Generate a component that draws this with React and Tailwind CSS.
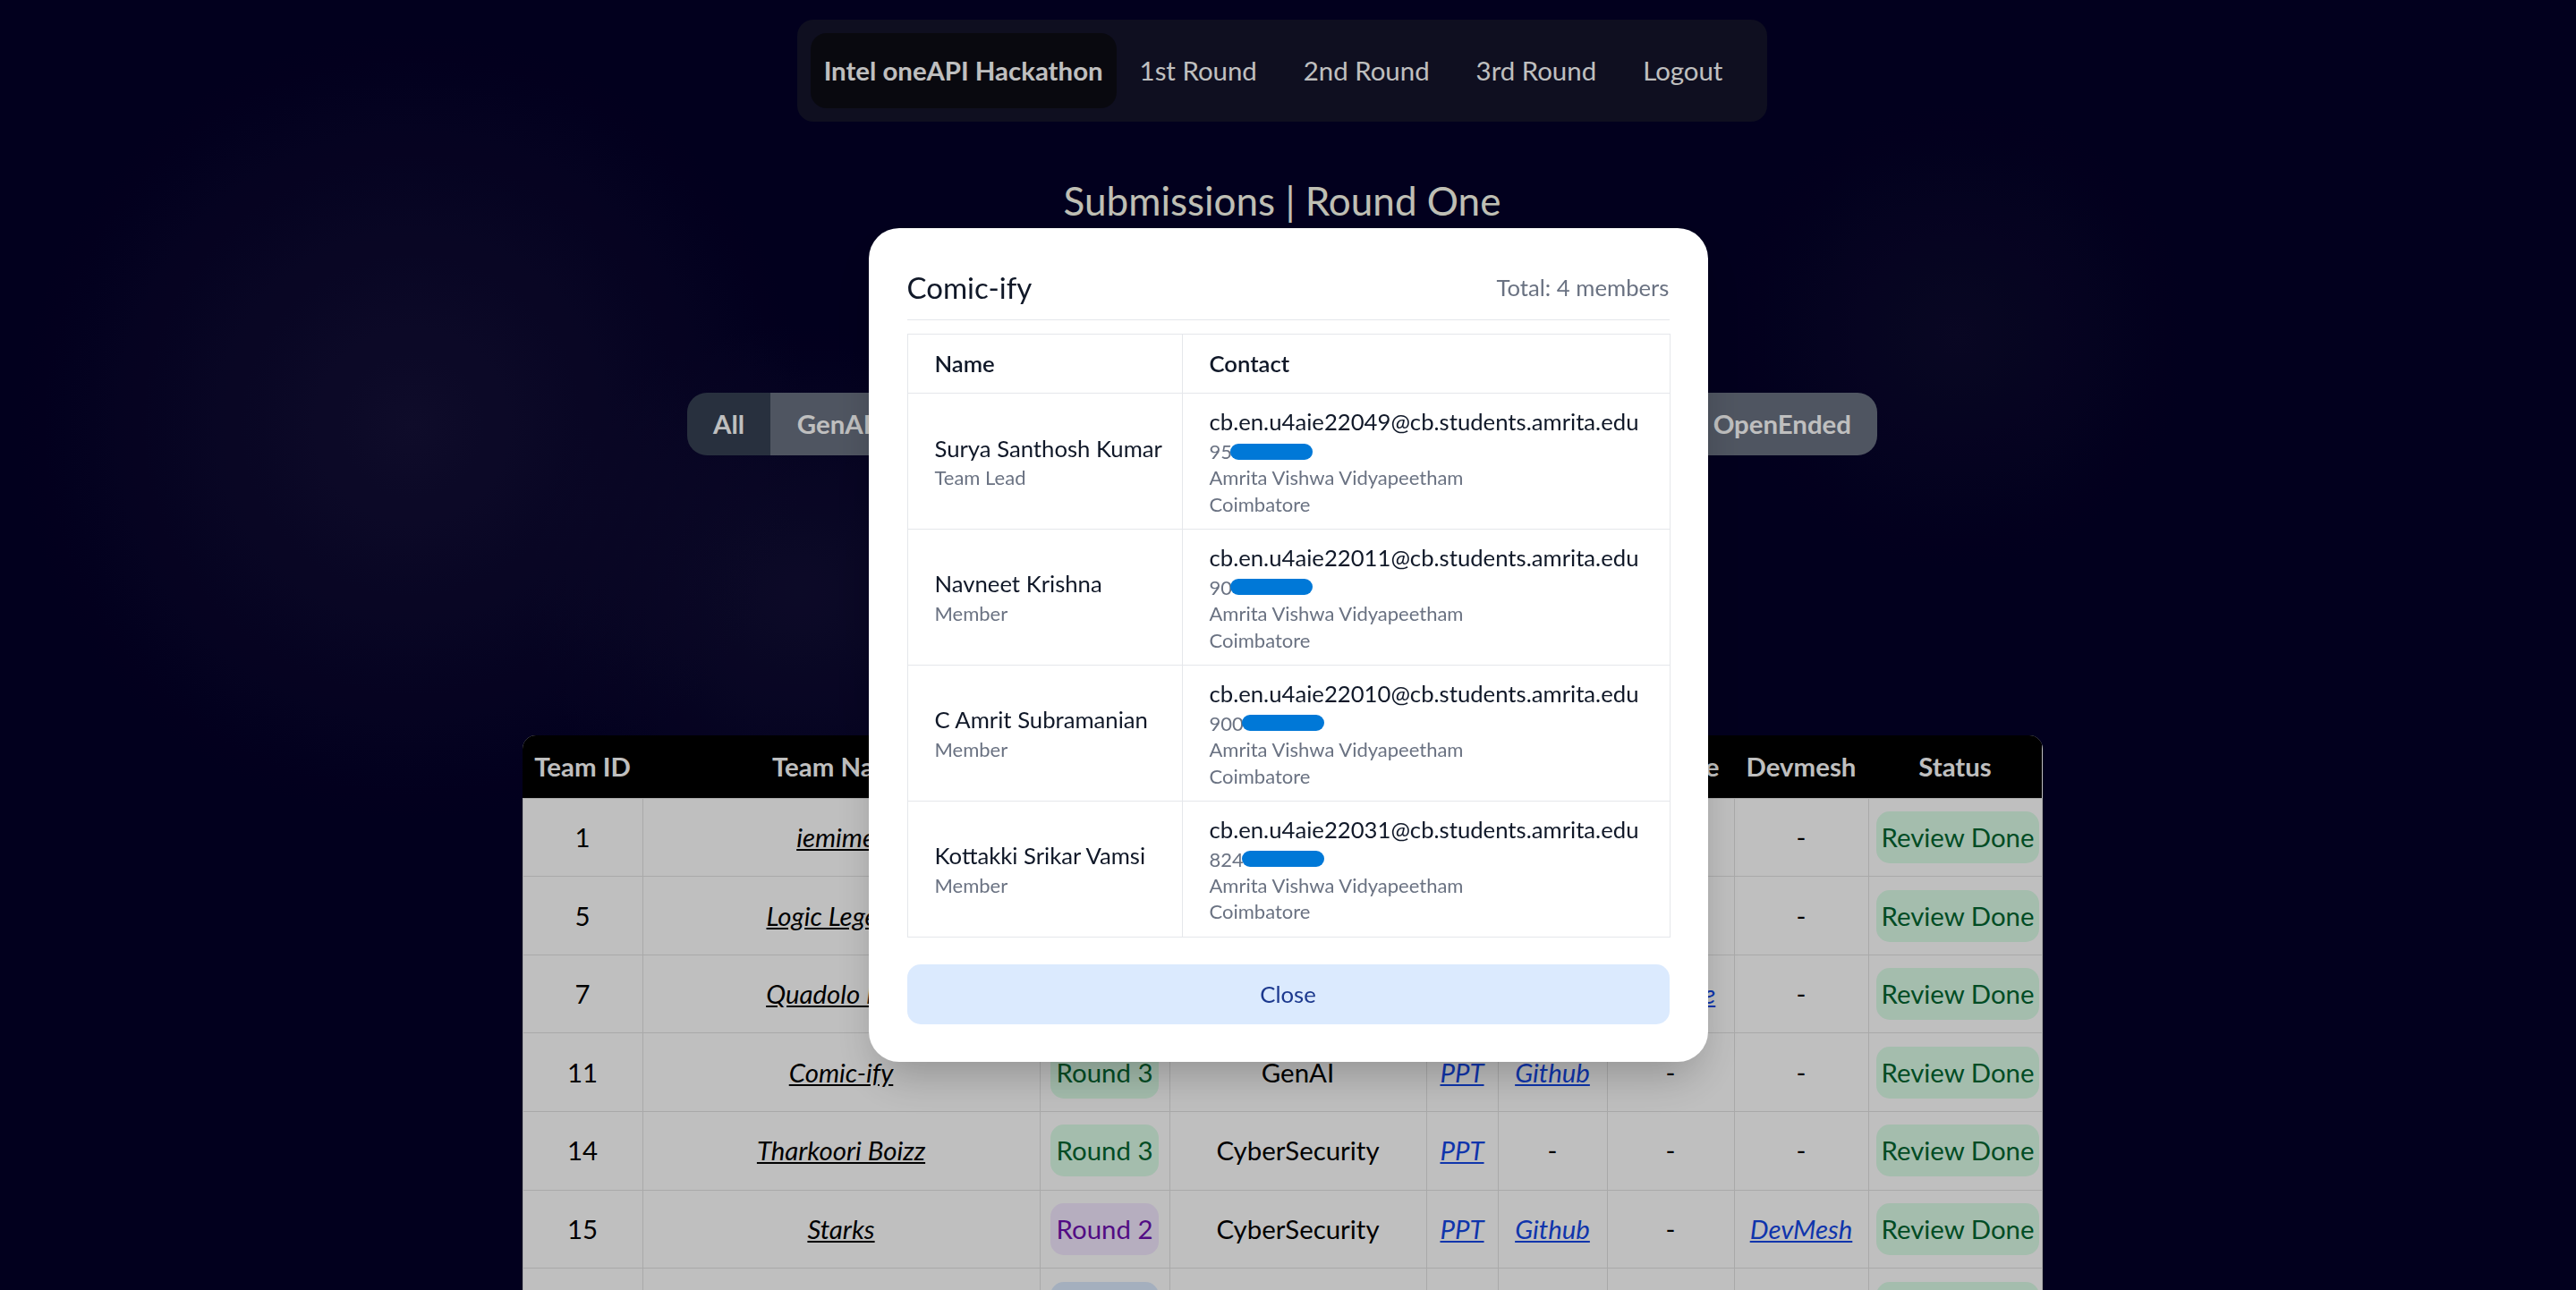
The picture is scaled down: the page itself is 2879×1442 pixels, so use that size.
import React from 'react';

const navItems = ['1st Round', '2nd Round', '3rd Round', 'Logout'];
const themes = ['All', 'GenAI', 'CyberSecurity', 'HealthTech', 'Blockchain', 'Sustainability', 'OpenEnded'];

const members = [
  { name: 'Surya Santhosh Kumar', role: 'Team Lead', email: 'cb.en.u4aie22049@cb.students.amrita.edu', phone: '95' },
  { name: 'Navneet Krishna', role: 'Member', email: 'cb.en.u4aie22011@cb.students.amrita.edu', phone: '90' },
  { name: 'C Amrit Subramanian', role: 'Member', email: 'cb.en.u4aie22010@cb.students.amrita.edu', phone: '900' },
  { name: 'Kottakki Srikar Vamsi', role: 'Member', email: 'cb.en.u4aie22031@cb.students.amrita.edu', phone: '824' },
];

const teams = [
  { id: 1, name: 'iemimes', round: 3, theme: 'GenAI', ppt: true, github: true, youtube: false, devmesh: false },
  { id: 5, name: 'Logic Legends', round: 3, theme: 'GenAI', ppt: true, github: true, youtube: false, devmesh: false },
  { id: 7, name: 'Quadolo Labs', round: 3, theme: 'OpenEnded', ppt: true, github: true, youtube: true, devmesh: false },
  { id: 11, name: 'Comic-ify', round: 3, theme: 'GenAI', ppt: true, github: true, youtube: false, devmesh: false },
  { id: 14, name: 'Tharkoori Boizz', round: 3, theme: 'CyberSecurity', ppt: true, github: false, youtube: false, devmesh: false },
  { id: 15, name: 'Starks', round: 2, theme: 'CyberSecurity', ppt: true, github: true, youtube: false, devmesh: true },
  { id: 17, name: 'Code Crusaders', round: 1, theme: 'GenAI', ppt: true, github: true, youtube: false, devmesh: false },
];

const roundBadge = {
  1: 'bg-blue-100 text-blue-800',
  2: 'bg-purple-100 text-purple-800',
  3: 'bg-green-100 text-green-800',
};

const cell = 'border border-[#e2e2e2] px-[8px] py-[14.3px] text-center align-middle';
const link = 'italic underline text-blue-700';

const Dash = () => <span className="text-black">-</span>;

const App = () => {
  return (
    <div className="relative h-screen overflow-hidden bg-[#030028] bg-[radial-gradient(circle_at_16%_33%,#141038_0px,transparent_440px),radial-gradient(circle_at_31%_46%,#110e35_0px,transparent_300px),radial-gradient(circle_at_76%_26%,#0c0a2f_0px,transparent_260px)] font-[Lato,sans-serif]">
      <div className="flex flex-col items-center pr-[13px]">
        {/* Navbar */}
        <nav className="mt-[22px] flex items-center rounded-[18px] bg-[#14142b] py-[15px] pl-[15px] pr-[24px] text-[29.4px] leading-[44px] text-white">
          <span className="rounded-[18px] bg-[#0d0d15] px-[15px] py-[20px] font-bold">Intel oneAPI Hackathon</span>
          {navItems.map((item) => (
            <span key={item} className="px-[26px] py-[20px]">{item}</span>
          ))}
        </nav>

        <h1 className="mt-[59px] text-[44px] leading-[58.7px] text-[#fffff0]">Submissions | Round One</h1>

        {/* Theme filter */}
        <div className="mt-[185px] flex overflow-hidden rounded-[22px] text-[29.4px] font-bold leading-[44px] text-white">
          {themes.map((t, i) => (
            <span key={t} className={`px-[29.4px] py-[13px] ${i === 0 ? 'bg-gray-700' : 'bg-gray-500'}`}>{t}</span>
          ))}
        </div>

        {/* Submissions table */}
        <div className="mt-[313px] overflow-hidden rounded-t-[15px]">
          <table className="w-[1698px] table-fixed border-collapse bg-white text-[29.4px] leading-[44px] text-black">
            <colgroup>
              <col className="w-[134px]" />
              <col className="w-[444px]" />
              <col className="w-[145px]" />
              <col className="w-[287px]" />
              <col className="w-[80px]" />
              <col className="w-[122px]" />
              <col className="w-[142px]" />
              <col className="w-[150px]" />
              <col className="w-[194px]" />
            </colgroup>
            <thead>
              <tr className="bg-black text-white">
                {['Team ID', 'Team Name', 'Round', 'Theme', 'PPT', 'Github', 'Youtube', 'Devmesh', 'Status'].map((h) => (
                  <th key={h} className="px-[8px] py-[13px] text-center font-bold">{h}</th>
                ))}
              </tr>
            </thead>
            <tbody>
              {teams.map((t) => (
                <tr key={t.id}>
                  <td className={cell}>{t.id}</td>
                  <td className={cell}><span className="italic underline">{t.name}</span></td>
                  <td className={cell}>
                    <span className={`inline-block whitespace-nowrap rounded-[15px] px-[7px] py-[7px] ${roundBadge[t.round]}`}>Round {t.round}</span>
                  </td>
                  <td className={cell}>{t.theme}</td>
                  <td className={cell}>{t.ppt ? <span className={link}>PPT</span> : <Dash />}</td>
                  <td className={cell}>{t.github ? <span className={link}>Github</span> : <Dash />}</td>
                  <td className={cell}>{t.youtube ? <span className={link}>Youtube</span> : <Dash />}</td>
                  <td className={cell}>{t.devmesh ? <span className={link}>DevMesh</span> : <Dash />}</td>
                  <td className={cell}>
                    <span className="inline-block whitespace-nowrap rounded-[15px] bg-green-100 px-[6px] py-[7px] text-green-800">Review Done</span>
                  </td>
                </tr>
              ))}
            </tbody>
          </table>
        </div>
      </div>

      {/* Members modal */}
      <div className="fixed inset-0 flex items-center justify-center bg-black/25">
        <div className="w-[938px] rounded-[34px] bg-white px-[43px] pb-[42px] pt-[45px] shadow-2xl">
          <div className="flex items-center justify-between border-b border-[#e5e7eb] pb-[15px]">
            <h2 className="text-[33px] leading-[42px] text-gray-900">Comic-ify</h2>
            <span className="text-[25.7px] leading-[36.7px] text-gray-500">Total: 4 members</span>
          </div>

          <table className="mt-[15px] w-full table-fixed border-collapse border border-[#e5e7eb]">
            <colgroup>
              <col className="w-[307px]" />
              <col className="w-[545px]" />
            </colgroup>
            <thead>
              <tr>
                <th className="border border-[#e5e7eb] px-[30px] py-[14px] text-left text-[25.7px] font-semibold leading-[36.7px] text-gray-900">Name</th>
                <th className="border border-[#e5e7eb] px-[30px] py-[14px] text-left text-[25.7px] font-semibold leading-[36.7px] text-gray-900">Contact</th>
              </tr>
            </thead>
            <tbody>
              {members.map((m) => (
                <tr key={m.email}>
                  <td className="border border-[#e5e7eb] px-[30px] py-[13px] align-middle">
                    <div className="whitespace-nowrap text-[25.7px] leading-[36.7px] text-gray-900">{m.name}</div>
                    <div className="text-[22px] leading-[29.4px] text-gray-500">{m.role}</div>
                  </td>
                  <td className="border border-[#e5e7eb] px-[30px] py-[13px] align-middle">
                    <div className="whitespace-nowrap text-[25.7px] leading-[36.7px] text-gray-900">{m.email}</div>
                    <div className="flex items-center text-[22px] leading-[29.4px] text-gray-500">
                      {m.phone}
                      <span className="ml-[-2px] inline-block h-[18px] w-[92px] rounded-full bg-[#0078d7]" />
                    </div>
                    <div className="text-[22px] leading-[29.4px] text-gray-500">Amrita Vishwa Vidyapeetham</div>
                    <div className="text-[22px] leading-[29.4px] text-gray-500">Coimbatore</div>
                  </td>
                </tr>
              ))}
            </tbody>
          </table>

          <button className="mt-[30px] w-full rounded-[15px] bg-blue-100 py-[15px] text-[25.7px] leading-[36.7px] text-blue-900">
            Close
          </button>
        </div>
      </div>
    </div>
  );
};

export default App;
